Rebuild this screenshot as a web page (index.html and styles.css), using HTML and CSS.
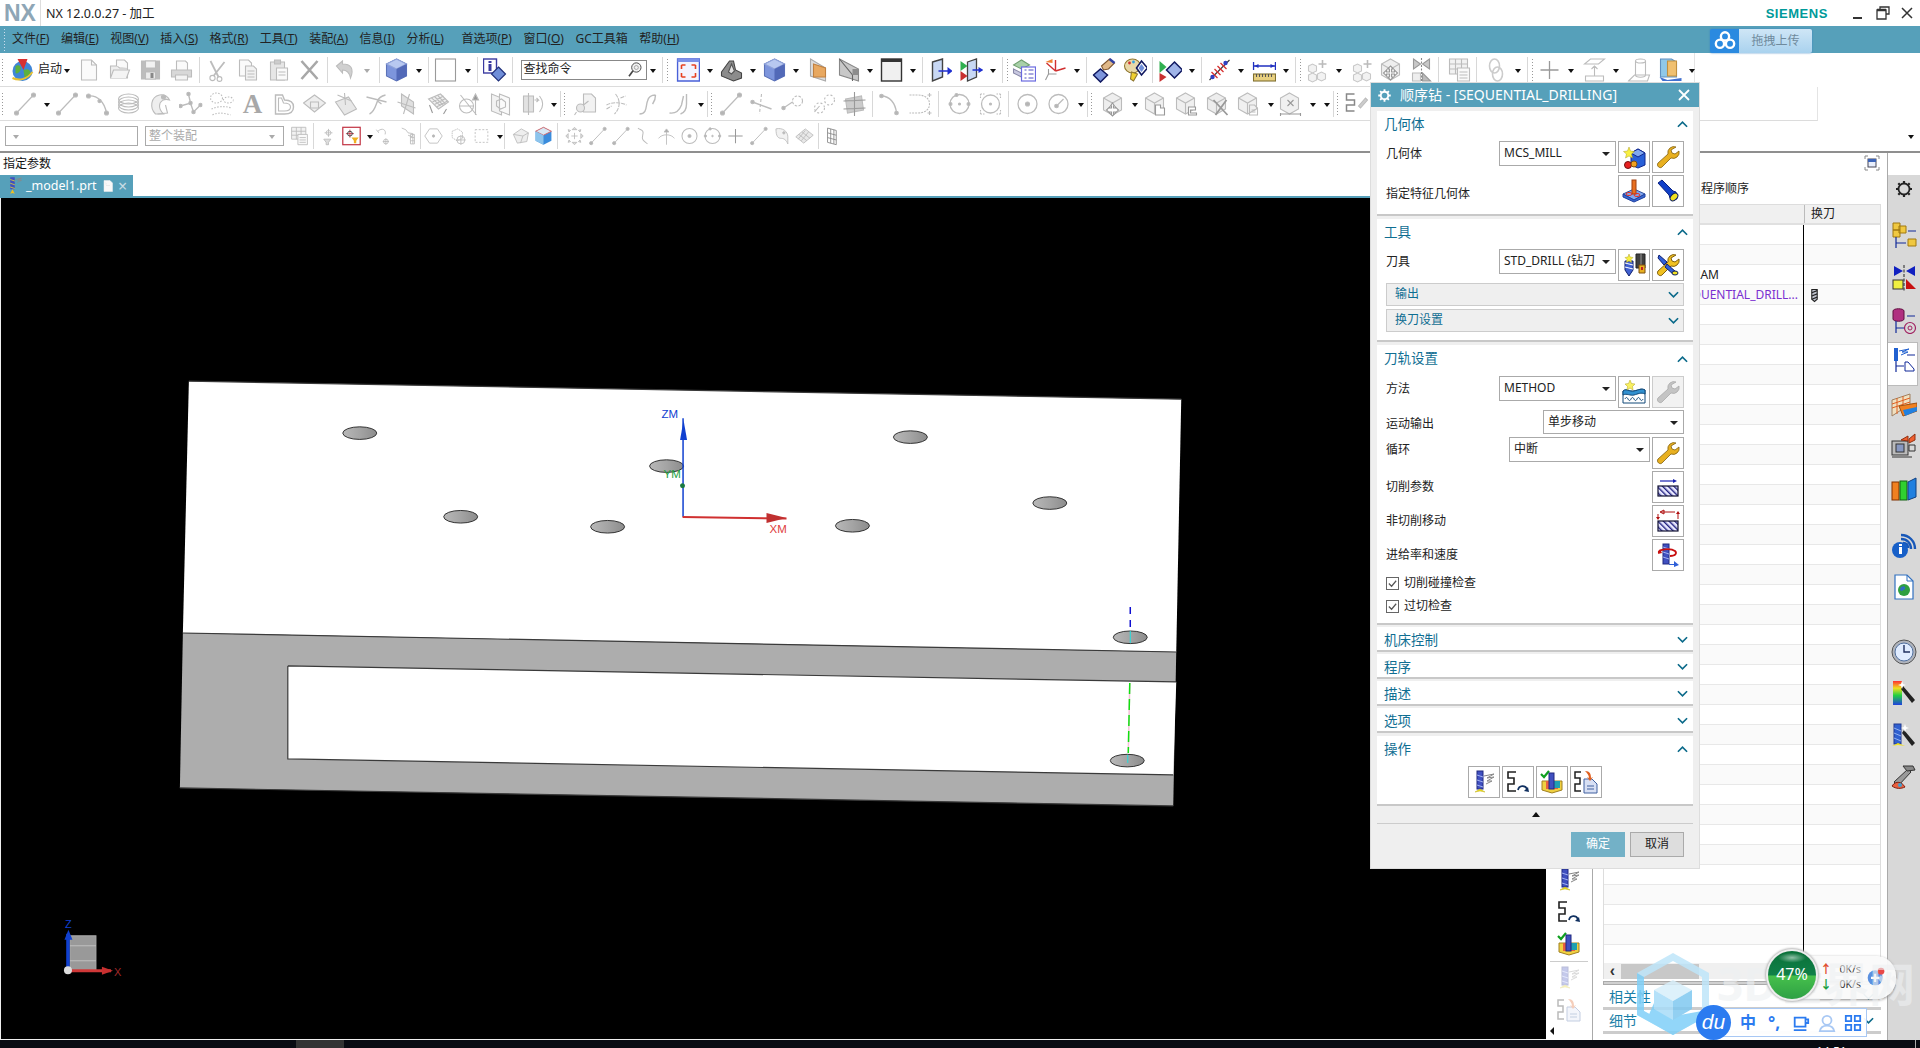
FILE: index.html
```html
<!DOCTYPE html>
<html lang="zh-CN">
<head>
<meta charset="utf-8">
<title>NX 12.0.0.27 - 加工</title>
<link rel="stylesheet" href="styles.css">
</head>
<body>
<svg class="defs" aria-hidden="true">
<defs>
<pattern id="hatch" width="4" height="4" patternUnits="userSpaceOnUse" patternTransform="rotate(-45)"><rect width="4" height="4" fill="#e8e8ff"/><rect width="1.4" height="4" fill="#202080"/></pattern>
<linearGradient id="rainbow" x1="0" y1="0" x2="0" y2="1"><stop offset="0" stop-color="#ff3030"/><stop offset=".3" stop-color="#f0e020"/><stop offset=".6" stop-color="#20d040"/><stop offset="1" stop-color="#2040e0"/></linearGradient>
<linearGradient id="holeg" x1="0" y1="0" x2="1" y2="0"><stop offset="0" stop-color="#b8b8b8"/><stop offset=".5" stop-color="#a4a4a4"/><stop offset="1" stop-color="#8c8c8c"/></linearGradient>
<symbol id="globe" viewBox="0 0 24 24"><circle cx="12" cy="13" r="10" fill="#3f86d8" stroke="none"/><path d="M5 8c4-2 6 1 5 4s-4 4-5 3zM13 12c4-2 7 0 7 3s-4 6-6 4z" fill="#5cb040" stroke="none"/><path d="M7 1l10 0-4 11z" fill="#d83030" stroke="none"/><path d="M2 20c6 3 14 2 20-6" stroke="#e8c030" stroke-width="2"/></symbol>
<symbol id="doc" viewBox="0 0 24 24"><path d="M5 2h10l5 5v15H5z" fill="#fafafa"/><path d="M15 2v5h5"/></symbol>
<symbol id="open" viewBox="0 0 24 24"><path d="M3 8h7l2 2h8v10H3z" fill="#eee"/><path d="M9 8V2h8l3 3v5" fill="#fafafa"/><path d="M3 20l3-8h16l-3 8" fill="#f4f4f4"/></symbol>
<symbol id="save" viewBox="0 0 24 24"><path d="M3 3h18v18H3z" fill="#bdbdbd"/><path d="M7 3h10v7H7z" fill="#f2f2f2"/><path d="M7 14h10v7H7z" fill="#ececec"/><path d="M12 15h3v5h-3z" fill="#888" stroke="none"/></symbol>
<symbol id="print" viewBox="0 0 24 24"><path d="M7 12V3h9l2 2v7" fill="#fafafa"/><path d="M2 12h20v7H2z" fill="#d8d8d8"/><path d="M6 17h12v5H6z" fill="#f4f4f4"/></symbol>
<symbol id="cut" viewBox="0 0 24 24"><circle cx="8" cy="20" r="2.6"/><circle cx="15" cy="21" r="2.4"/><path d="M9 18L20 4M14 19L6 3" stroke-width="1.8"/></symbol>
<symbol id="copy" viewBox="0 0 24 24"><path d="M4 2h9l3 3v13H4z" fill="#fafafa"/><path d="M10 8h8l3 3v11H10z" fill="#f2f2f2"/><path d="M12 13h7M12 16h7M12 19h7"/></symbol>
<symbol id="paste" viewBox="0 0 24 24"><path d="M4 4h14v18H4z" fill="#e6e6e6"/><path d="M8 2h6v4H8z" fill="#ccc"/><path d="M10 10h11v12H10z" fill="#fafafa"/><path d="M12 14h7M12 17h7"/></symbol>
<symbol id="del" viewBox="0 0 24 24"><path d="M4 3l16 18M20 3L4 21" stroke="#a8a8a8" stroke-width="2.6"/></symbol>
<symbol id="undo" viewBox="0 0 24 24"><path d="M4 8l6-5v3c8 0 12 4 8 14-1-5-3-8-8-8v3z" fill="#d0d0d0"/></symbol>
<symbol id="cube" viewBox="0 0 24 24"><path d="M12 1l10 5v12l-10 5-10-5V6z" fill="#7d95dc" stroke="#5c73b8"/><path d="M2 6l10 5 10-5-10-5z" fill="#b8c8f0" stroke="#8fa2d8"/><path d="M12 11v12l10-5V6z" fill="#5269b8" stroke="none"/></symbol>
<symbol id="frame" viewBox="0 0 24 24"><rect x="2" y="1" width="20" height="22" fill="#fff" stroke="#9a9a9a"/></symbol>
<symbol id="info" viewBox="0 0 24 24"><rect x="1" y="1" width="13" height="14" fill="#fff" stroke="#3a3aa0" stroke-width="1.4"/><path d="M6 3h3v2H6zM6 6h3v7H6z" fill="#3a3aa0" stroke="none"/><path d="M16 9l7 7-7 7-7-7z" fill="#6f8ed8" stroke="#20307a" stroke-width="1.2"/></symbol>
<symbol id="fit" viewBox="0 0 24 24"><rect x="1" y="1" width="22" height="22" fill="#f4f4ff" stroke="#4860d8" stroke-width="1.5"/><path d="M1 1h22v3H1z" fill="#7c90e8" stroke="none"/><path d="M5 7h4M5 7v4M19 7h-4M19 7v4M5 19h4M5 19v-4M19 19h-4M19 19v-4" stroke="#e84020" stroke-width="1.6"/></symbol>
<symbol id="shade" viewBox="0 0 24 24"><path d="M2 14l8-11h4l2 9 6 3v5l-8 3-12-5z" fill="#8c8c8c" stroke="#444"/><path d="M9 14l3-8 3 7-3 3z" fill="#e0e0e0" stroke="#555"/></symbol>
<symbol id="vorange" viewBox="0 0 24 24"><path d="M5 1l15 9v13L5 18z" fill="#ddd" stroke="#aaa"/><path d="M8 6l12 4v9H8z" fill="#e8a860" stroke="#c08040"/></symbol>
<symbol id="vgray" viewBox="0 0 24 24"><path d="M3 1l19 10v12L3 17z" fill="#c8c8c8" stroke="#888"/><path d="M3 1l13 16v6" stroke="#666"/><path d="M16 11h6v6h-6z" fill="#8c8c8c" stroke="none"/></symbol>
<symbol id="win" viewBox="0 0 24 24"><rect x="2" y="1" width="20" height="22" fill="#f0f0f0" stroke="#333" stroke-width="1.4"/><rect x="2" y="1" width="20" height="3" fill="#333" stroke="none"/></symbol>
<symbol id="vblue" viewBox="0 0 24 24"><path d="M4 4l10-3v18L4 23z" fill="#c8d8f4" stroke="#444" stroke-width="1.4"/><path d="M10 13h11" stroke="#2030d0" stroke-width="1.6"/><path d="M19 9l5 4-5 4z" fill="#2030d0" stroke="none"/></symbol>
<symbol id="vplay" viewBox="0 0 24 24"><path d="M8 4l9-3v18l-9 4z" fill="#c8d8f4" stroke="#444" stroke-width="1.3"/><path d="M1 3l7 5-7 5z" fill="#30b050" stroke="none"/><path d="M1 13l7 5-7 5z" fill="#c83030" stroke="none"/><path d="M13 12h7" stroke="#2030d0" stroke-width="1.6"/><path d="M19 9l5 3-5 3z" fill="#2030d0" stroke="none"/></symbol>
<symbol id="lst" viewBox="0 0 24 24"><path d="M1 7l8-5 8 5-8 4z" fill="#a8d0a8" stroke="#70a070"/><path d="M1 11l8 4v4l-8-4zM1 15l8 4" fill="#c8c8e0" stroke="#8888a8"/><rect x="9" y="9" width="14" height="14" fill="#fff" stroke="#6a6ae0" stroke-width="1.2"/><path d="M12 12h2M16 12h5M12 16h2M16 16h5M12 20h2M16 20h5" stroke="#5050c0"/></symbol>
<symbol id="axes" viewBox="0 0 24 24"><path d="M12 13V2M12 13l10-3M12 13L3 5" stroke="#d03030" stroke-width="1.4"/><path d="M2 4l7-3v4z" fill="#f08030" stroke="none"/><path d="M5 16l-3 6M5 16h8M5 16v-5" stroke="#999"/></symbol>
<symbol id="hand" viewBox="0 0 24 24"><path d="M9 8l8-7 5 4-6 6-5 1z" fill="#e0b888" stroke="#805830"/><path d="M17 1l5 4" stroke="#3040a0" stroke-width="2.5"/><path d="M8 11l7 6-7 7-7-7z" fill="#7d95dc" stroke="#101860" stroke-width="1.5"/></symbol>
<symbol id="palette" viewBox="0 0 24 24"><ellipse cx="9" cy="8" rx="8" ry="7" fill="#e8d8a8" stroke="#907830"/><circle cx="6" cy="5" r="1.4" fill="#d03030" stroke="none"/><circle cx="10" cy="4" r="1.4" fill="#30a0e0" stroke="none"/><path d="M8 14l6 2-4 7-3-2z" fill="#f0d030" stroke="#907830"/><path d="M18 3l6 7-6 7-5-7z" fill="#fff" stroke="#101860" stroke-width="1.6"/><path d="M18 6l3 4-3 4-3-4z" fill="#6f8ed8" stroke="none"/></symbol>
<symbol id="pdia" viewBox="0 0 24 24"><path d="M1 3l7 6-7 6z" fill="#30b050" stroke="none"/><path d="M1 15l7 4-7 5z" fill="#c83030" stroke="none"/><path d="M16 4l8 8-8 8-8-8z" fill="#a0b4e8" stroke="#101860" stroke-width="1.5"/></symbol>
<symbol id="ant" viewBox="0 0 24 24"><path d="M2 22L22 2" stroke="#333"/><path d="M4 14l6 6M7 11l6 6M10 8l6 6M13 5l6 6" stroke="#d83030" stroke-width="1.3"/><circle cx="5" cy="19" r="2.2" fill="#3040c0" stroke="none"/><circle cx="18" cy="5" r="2.2" fill="#3040c0" stroke="none"/></symbol>
<symbol id="dim" viewBox="0 0 24 24"><path d="M1 4v8M23 4v8M1 8h22" stroke="#2030c0" stroke-width="1.4"/><path d="M2 8l4-2v4zM22 8l-4-2v4z" fill="#2030c0" stroke="none"/><rect x="1" y="16" width="22" height="7" fill="#e8d080" stroke="#807030"/><path d="M4 16v3M7 16v3M10 16v3M13 16v3M16 16v3M19 16v3" stroke="#555"/></symbol>
<symbol id="cplus" viewBox="0 0 24 24"><path d="M3 8l4-2 4 2v5l-4 2-4-2zM3 17l4-2 4 2v5l-4 2-4-2zM12 16l4-2 4 2v5l-4 2-4-2z" fill="#f2f2f2" stroke="#c8c8c8"/><path d="M17 2v8M13 6h8" stroke="#bbb" stroke-width="1.6"/></symbol>
<symbol id="cmove" viewBox="0 0 24 24"><path d="M12 1l9 5v11l-9 5-9-5V6z" fill="#eee" stroke="#bbb"/><path d="M12 11v11M3 6l9 5 9-5"/><path d="M12 8l3 3h-2v3h3v-2l3 3-3 3v-2h-3v3h2l-3 3-3-3h2v-3H8v2l-3-3 3-3v2h3v-3H9z" fill="#fff" stroke="#999"/></symbol>
<symbol id="mirror" viewBox="0 0 24 24"><path d="M12 0v24" stroke="#888" stroke-dasharray="2 1.5"/><path d="M4 1l7 5-7 5zM20 1l-7 5 7 5z" fill="#c8c8c8" stroke="#999"/><path d="M3 15h8v8H3z" fill="#eee"/><path d="M13 15l8 8h-8z" fill="#bbb" stroke="#999"/></symbol>
<symbol id="gridd" viewBox="0 0 24 24"><path d="M2 1h18v15H2z" fill="#f2f2f2"/><path d="M2 6h18M2 11h18M8 1v15M14 1v15"/><path d="M10 10h12v13H10z" fill="#fafafa"/><path d="M12 14h8M12 17h8M12 20h8"/></symbol>
<symbol id="link" viewBox="0 0 24 24"><ellipse cx="10" cy="8" rx="5" ry="7" fill="none" stroke-width="1.6" stroke="#ccc"/><ellipse cx="13" cy="16" rx="5" ry="7" stroke-width="1.6" stroke="#ccc"/></symbol>
<symbol id="plus" viewBox="0 0 24 24"><path d="M12 3v18M3 12h18" stroke="#999" stroke-width="1.3"/></symbol>
<symbol id="plusk" viewBox="0 0 24 24"><path d="M12 3v18M3 12h18" stroke="#222" stroke-width="1.3"/></symbol>
<symbol id="extr" viewBox="0 0 24 24"><path d="M8 1h14l-6 5H2zM3 18h18v5H3zM12 18V8M9 11l3-3 3 3"/></symbol>
<symbol id="cyl" viewBox="0 0 24 24"><ellipse cx="13" cy="3" rx="5" ry="2"/><path d="M8 3v14M18 3v14M8 17c0 3 10 3 10 0M1 23l6-6h15l-2 6z"/></symbol>
<symbol id="ccol" viewBox="0 0 24 24"><path d="M2 1h11l5 3v15H2z" fill="#90c8e8" stroke="#6090c0"/><path d="M9 3h9v15H9z" fill="#f0c070" stroke="#c09040"/><path d="M1 19l8 3 14-2 0 3H4z" fill="#4070d0" stroke="none"/></symbol>
<symbol id="ln" viewBox="0 0 24 24"><path d="M4 21L21 3" stroke-width="1.2"/><circle cx="4" cy="21" r="2" fill="#b5b5b5"/><circle cx="21" cy="3" r="2" fill="#b5b5b5"/></symbol>
<symbol id="arc" viewBox="0 0 24 24"><path d="M3 4c9-1 16 6 18 17" stroke-width="1.4"/><circle cx="3" cy="4" r="2" fill="#b5b5b5"/><circle cx="21" cy="21" r="2" fill="#b5b5b5"/><circle cx="14" cy="9" r="1.6" fill="#b5b5b5"/></symbol>
<symbol id="spir" viewBox="0 0 24 24"><ellipse cx="12" cy="7" rx="10" ry="5"/><ellipse cx="12" cy="10" rx="10" ry="5"/><ellipse cx="12" cy="13" rx="10" ry="5"/><ellipse cx="12" cy="16" rx="10" ry="5"/></symbol>
<symbol id="fan" viewBox="0 0 24 24"><path d="M8 22C2 16 3 5 12 3c5-1 9 2 10 5-5-2-10 1-10 6 0 4 2 6 4 8z" fill="#eee"/><path d="M10 22l10-1-2-8" /><circle cx="16" cy="5" r="2" fill="#bbb"/></symbol>
<symbol id="star" viewBox="0 0 24 24"><path d="M2 14l10-3 3 9 7-7M12 11l-2-9" stroke-width="1.4"/><circle cx="2" cy="14" r="1.7" fill="#b5b5b5"/><circle cx="12" cy="11" r="1.7" fill="#b5b5b5"/><circle cx="15" cy="20" r="1.7" fill="#b5b5b5"/><circle cx="22" cy="13" r="1.7" fill="#b5b5b5"/><circle cx="10" cy="2" r="1.7" fill="#b5b5b5"/></symbol>
<symbol id="dots" viewBox="0 0 24 24"><g stroke-dasharray="1.5 1.5"><ellipse cx="7" cy="6" rx="6" ry="5"/><ellipse cx="19" cy="8" rx="5" ry="3"/><path d="M2 17c6-3 14-3 20-1M3 23c5-3 12-2 18 0"/></g></symbol>
<symbol id="face" viewBox="0 0 24 24"><path d="M4 3h7l2 5c7 0 9 3 9 7s-3 7-9 7H4z" stroke-width="1.4"/><path d="M7 6h3l2 5c6 0 7 2 7 4s-2 4-6 4H7z"/></symbol>
<symbol id="tilt" viewBox="0 0 24 24"><path d="M1 11l11-8 11 8-11 9z" fill="#eee"/><path d="M8 10h8v6H8z"/></symbol>
<symbol id="tilt2" viewBox="0 0 24 24"><path d="M2 10l13-5 8 12-12 6z" fill="#e8e8e8"/><path d="M11 1l1 12M4 3l14 6"/></symbol>
<symbol id="cross" viewBox="0 0 24 24"><path d="M5 22c5-2 6-8 8-13 1-3 4-5 8-6M2 5l20 5M13 9l4 3" stroke-width="1.4"/></symbol>
<symbol id="plane" viewBox="0 0 24 24"><path d="M6 2l12 8v12L6 14z" fill="#e0e0e0"/><path d="M2 10l18 6M14 2L8 22"/></symbol>
<symbol id="mesh" viewBox="0 0 24 24"><path d="M2 7l12-5 8 8-10 7z" fill="#f0f0f0"/><path d="M5 5.800l9 8M8 4.500l9 9M11 3.200l8 9M6 10l11-6M8 12.500l11-6M10 15l11-6"/><path d="M3 13l3 8M20 17l-3 5" stroke="#999"/></symbol>
<symbol id="sect" viewBox="0 0 24 24"><ellipse cx="9" cy="14" rx="7" ry="7"/><path d="M2 14h14M3 3l16 20M18 3v20"/><path d="M18 2l3 6h-6z" fill="#999"/></symbol>
<symbol id="box2" viewBox="0 0 24 24"><path d="M3 2l10 4v17L3 19z" fill="#f2f2f2"/><path d="M11 2l10 4v17l-10-4z" fill="#fafafa"/><path d="M8 9l5-2 4 3v5l-5 2-4-3z"/></symbol>
<symbol id="cyl2" viewBox="0 0 24 24"><path d="M4 4h10v16H4z" fill="#e2e2e2"/><path d="M9 1v22"/><path d="M15 8h4l-2-2M19 8l-2 2M20 4c4 5 4 11 0 16"/></symbol>
<symbol id="key" viewBox="0 0 24 24"><path d="M10 2h8l4 4v14H10z" fill="#f2f2f2"/><circle cx="7" cy="16" r="4" fill="#e8e8e8"/><path d="M3 20l-2 3M10 13l5-4"/></symbol>
<symbol id="sw" viewBox="0 0 24 24"><path d="M2 13c6-3 14-3 20 0M11 2c5 6 5 14-1 20M2 17l5-3M16 6l5-2" stroke-dasharray="4 1"/></symbol>
<symbol id="scurve" viewBox="0 0 24 24"><path d="M4 22c8 0 6-8 8-13 1-4 4-6 8-6M17 12c2-3 3-4 3-9" stroke-width="1.4"/></symbol>
<symbol id="ucurve" viewBox="0 0 24 24"><path d="M3 21c7 1 10-3 12-8l2-9M20 2v10c0 6-3 9-6 10" stroke-width="1.4"/></symbol>
<symbol id="cross2" viewBox="0 0 24 24"><path d="M12 2L10 22" stroke-dasharray="3 2"/><path d="M3 10l19 7" stroke-width="1.4"/><circle cx="3" cy="10" r="1.7" fill="#b5b5b5"/></symbol>
<symbol id="arcd" viewBox="0 0 24 24"><path d="M3 16l9-6"/><circle cx="3" cy="16" r="1.7" fill="#b5b5b5"/><circle cx="17" cy="9" r="5" stroke-dasharray="2.500 1.500"/></symbol>
<symbol id="arcd2" viewBox="0 0 24 24"><path d="M3 20L8 14" /><circle cx="8" cy="16" r="5" stroke-dasharray="2 2"/><circle cx="18" cy="8" r="5" stroke-dasharray="2 2"/></symbol>
<symbol id="pad" viewBox="0 0 24 24"><path d="M3 7l16-3 2 14-16 3z" fill="#ccc"/><path d="M1 9l22-1M1 17l22-1M12 0v24" stroke="#999"/></symbol>
<symbol id="arc2" viewBox="0 0 24 24"><path d="M4 4c8 0 14 7 15 17" stroke-width="1.4"/><circle cx="4" cy="4" r="1.8" fill="#b5b5b5"/><circle cx="19" cy="21" r="1.8" fill="#b5b5b5"/></symbol>
<symbol id="cap" viewBox="0 0 24 24"><path d="M1 3h8c7 0 12 3 12 9s-5 9-12 9H1" stroke-dasharray="2 1"/><path d="M21 1v4M19 3h4M21 19v4M19 21h4"/></symbol>
<symbol id="circ" viewBox="0 0 24 24"><circle cx="12" cy="12" r="9.500" stroke-width="1.3"/><circle cx="12" cy="12" r="1" fill="#b5b5b5"/><circle cx="21" cy="12" r="1.500" fill="#b5b5b5"/><circle cx="9" cy="3" r="1.500" fill="#b5b5b5"/><circle cx="3" cy="12" r="1.500" fill="#b5b5b5"/></symbol>
<symbol id="circb" viewBox="0 0 24 24"><circle cx="12" cy="12" r="9" stroke-width="1.3"/><circle cx="12" cy="12" r="1" fill="#b5b5b5"/><path d="M2 2h4M2 2v4M22 2h-4M22 2v4M2 22h4M2 22v-4M22 22h-4M22 22v-4" stroke-dasharray="1.500 1"/></symbol>
<symbol id="circc" viewBox="0 0 24 24"><circle cx="12" cy="12" r="9.500" stroke-width="1.3"/><circle cx="12" cy="12" r="2" fill="#b5b5b5"/></symbol>
<symbol id="circd" viewBox="0 0 24 24"><circle cx="12" cy="12" r="9.500" stroke-width="1.3"/><path d="M10 14l7-7" stroke-width="1.3"/><circle cx="10" cy="14" r="1.800" fill="#b5b5b5"/></symbol>
<symbol id="b1" viewBox="0 0 24 24"><path d="M12 1l9 5v12l-9 5-9-5V6z" fill="#eee" stroke="#bbb"/><path d="M12 11v12M3 6l9 5 9-5"/><path d="M12 11l2 3h-1v2h2v-1l3 3-3 3v-1h-2v2h1l-2 2-2-2h1v-2H9v1l-3-3 3-3v1h2v-2h-1z" fill="#fff" stroke="#999"/></symbol>
<symbol id="b2" viewBox="0 0 24 24"><path d="M11 1l9 5v11l-9 5-9-5V6z" fill="#f0f0f0"/><path d="M11 11v11M2 6l9 5 9-5"/><path d="M12 13h5v3h4v7h-9z" fill="#fff" stroke="#999"/></symbol>
<symbol id="b3" viewBox="0 0 24 24"><path d="M11 1l9 5v11l-9 5-9-5V6z" fill="#f0f0f0"/><path d="M11 11v11M2 6l9 5 9-5"/><path d="M14 15h7v3h-5v3h6v2h-8z" fill="#fff" stroke="#999"/></symbol>
<symbol id="b4" viewBox="0 0 24 24"><path d="M11 1l9 5v11l-9 5-9-5V6z" fill="#ededed"/><path d="M11 11v11M2 6l9 5 9-5"/><path d="M8 8l14 15M21 8L10 23" stroke="#999" stroke-width="1.8"/></symbol>
<symbol id="b5" viewBox="0 0 24 24"><path d="M11 1l9 5v11l-9 5-9-5V6z" fill="#f0f0f0"/><path d="M11 11v11M2 6l9 5 9-5"/><path d="M13 13h5l3 3v7h-8zM15 18h4M15 20h4"/></symbol>
<symbol id="b6" viewBox="0 0 24 24"><path d="M11 1l9 5v11l-9 5-9-5V6z" fill="#f0f0f0"/><path d="M2 21v3M22 21v3M2 22h20M9 8l6 6M15 8l-6 6" stroke="#999"/></symbol>
<symbol id="sb" viewBox="0 0 24 24"><path d="M10 2H2v6h8v5H2v6h8" stroke="#888" stroke-width="1.5"/><path d="M14 14l7-8 2 2-7 8z" fill="#ccc"/></symbol>
<symbol id="drillk" viewBox="0 0 24 24"><path d="M4 1h16l-2 4H6z" fill="#444" stroke="#222"/><path d="M5 5h14v18H5z" fill="#666" stroke="#333"/><path d="M13 13h5v8h-5z" fill="#ddd" stroke="none"/><path d="M7 16h4v6H7z" fill="#aaa" stroke="none"/></symbol>
<symbol id="redar" viewBox="0 0 24 24"><path d="M3 22l16-17" stroke="#c83030" stroke-width="1.4"/><path d="M22 2l-7 2 4 4z" fill="#c83030" stroke="none"/><circle cx="3" cy="21" r="2" fill="#c83030" stroke="none"/></symbol>
<symbol id="gridv" viewBox="0 0 24 24"><path d="M7 2l11 3v18L7 20zM7 8l11 3M7 14l11 3M11 3v18M15 4v18" stroke="#888"/></symbol>
<symbol id="hexa" viewBox="0 0 24 24"><path d="M7 3h10l6 9-6 9H7L1 12z"/><circle cx="12" cy="12" r="1.500" fill="#b5b5b5"/></symbol>
<symbol id="hexb" viewBox="0 0 24 24"><path d="M4 6l7-3 6 4v8l-7 3-6-4z" stroke-dasharray="2 1"/><circle cx="15" cy="17" r="5"/><path d="M15 11v12M9 17h12"/></symbol>
<symbol id="sq" viewBox="0 0 24 24"><rect x="4" y="4" width="16" height="16" stroke-dasharray="2.500 2"/></symbol>
<symbol id="cgray" viewBox="0 0 24 24"><path d="M3 10l10-7 9 5-2 11-12 2z" fill="#eee"/><path d="M3 10l12 2 7-4M15 12l-3 9"/></symbol>
<symbol id="cblue" viewBox="0 0 24 24"><path d="M12 1l10 5v12l-10 5-10-5V6z" fill="#3a8cdc" stroke="none"/><path d="M2 6l10 5 10-5-10-5z" fill="#d8e8f4" stroke="#d86060"/><path d="M2 6v12l10 5V11z" fill="#8cc4ec" stroke="none"/></symbol>
<symbol id="wh" viewBox="0 0 24 24"><path d="M12 8v8M8 12h8"/><path d="M12 1l3 3h-6zM12 23l3-3H9zM1 12l3-3v6zM23 12l-3-3v6z" fill="#ddd"/><path d="M4 4l3 1-2 2zM20 4l-3 1 2 2zM4 20l3-1-2-2zM20 20l-3-1 2-2z" fill="#ddd"/></symbol>
<symbol id="tee" viewBox="0 0 24 24"><path d="M2 15c4-6 16-6 20 0M12 5v18"/><path d="M12 3l3 4H9z" fill="#aaa"/></symbol>
<symbol id="ss" viewBox="0 0 24 24"><path d="M5 2c4 3 8 2 6 9s3 8 6 11" stroke-width="1.3"/></symbol>
<symbol id="lens" viewBox="0 0 24 24"><circle cx="14" cy="9" r="7" fill="#f0f0f0" stroke="#444" stroke-width="1.4"/><circle cx="14" cy="9" r="3" stroke="#888"/><path d="M9 14l-6 8" stroke="#444" stroke-width="2.5"/></symbol>
<symbol id="ptfilter" viewBox="0 0 24 24"><path d="M12 3v10M7 8h10"/><circle cx="12" cy="8" r="3"/><path d="M6 16h9l-3 4v3h-3v-3z" fill="#ddd"/></symbol>
<symbol id="ptred" viewBox="0 0 24 24"><rect x="1" y="1" width="22" height="22" fill="#fff" stroke="#c03040" stroke-width="1.5"/><path d="M10 4v10M5 9h10" stroke="#c03040"/><circle cx="10" cy="9" r="3" stroke="#333"/><path d="M12 14h9l-3 4v3h-3v-3z" fill="#f0b020" stroke="none"/></symbol>
<symbol id="rot" viewBox="0 0 24 24"><path d="M5 6c5-5 11-2 9 4M3 4l3 4M15 15v8M11 19h8"/><circle cx="15" cy="19" r="3"/></symbol>
<symbol id="pl" viewBox="0 0 24 24"><path d="M6 2l5 2 3 4 6 1-1 4-5-2M17 10h5v12h-5zM17 14h5M17 18h5M20 10v12"/></symbol>
<symbol id="sphere" viewBox="0 0 24 24"><path d="M5 3c8-2 15 3 15 10v9c-2-5-5-7-8-7-4 0-7-2-7-12z" fill="#f2f2f2"/><circle cx="15" cy="8" r="1.500" fill="#bbb"/></symbol>
<symbol id="mesh2" viewBox="0 0 24 24"><path d="M1 13L13 3l10 8-12 10z" fill="#e8e8e8"/><path d="M5 10l10 8M9 7l10 8M13 5l-9 11M17 7l-9 11"/></symbol>

<symbol id="wrench" viewBox="0 0 24 24"><path d="M20 2a6 6 0 0 0-8 7L2 18c-2 3 2 6 4 4l9-9a6 6 0 0 0 8-7l-4 3-3-1-1-3z" fill="currentColor"/></symbol>
<symbol id="geonew" viewBox="0 0 24 24"><path d="M9 8l7-4 7 4v12l-7 3-7-3z" fill="#2860d8" stroke="#102890"/><path d="M9 8l7 4 7-4-7-4z" fill="#80a8f0" stroke="#102890"/><circle cx="6" cy="20" r="3.500" fill="#e82020" stroke="#701010"/><circle cx="12" cy="19" r="3" fill="#f0a020" stroke="#805010"/><path d="M7 2l1.500 4 4 .5-3 2.500 1 4-3.500-2-3.500 2 1-4-3-2.500 4-.5z" fill="#f8f040" stroke="#b0a020" stroke-width=".5"/></symbol>
<symbol id="feat" viewBox="0 0 24 24"><path d="M1 15l11-5 11 5-11 6z" fill="#80a8f0" stroke="#3050a0"/><path d="M1 15v3l11 5 11-5v-3l-11 6z" fill="#3868d0" stroke="#2040a0"/><rect x="10" y="1" width="4" height="14" fill="#e87020" stroke="#a04010"/><ellipse cx="7" cy="15" rx="3" ry="1.500" stroke="#e83020"/><ellipse cx="15" cy="16" rx="3" ry="1.500" stroke="#e83020"/></symbol>
<symbol id="flash" viewBox="0 0 24 24"><path d="M2 4l4-3 11 11 3 1 1 7-7-1-1-3z" fill="#1040c8" stroke="#082080"/><ellipse cx="18" cy="18" rx="4.500" ry="3" transform="rotate(-45 18 18)" fill="#f0e020" stroke="#102060"/></symbol>
<symbol id="toolnew" viewBox="0 0 24 24"><path d="M14 1h9v14h-9z" fill="#404040" stroke="#222"/><path d="M19 1v14" stroke="#999"/><path d="M17 12h6v8h-6z" fill="#e8b020" stroke="#805010"/><rect x="19" y="14" width="2" height="3" fill="#c02020" stroke="none"/><path d="M3 8h8v9l-4 6-4-6z" fill="#4060d0" stroke="#102070"/><path d="M3 10l8 2M3 14l8 2" stroke="#fff"/><path d="M7 1l1 3 3 .5-2 2 .5 3L7 8 4.500 9.500 5 6.500l-2-2L6 4z" fill="#f8f040" stroke="#b0a020" stroke-width=".5"/></symbol>
<symbol id="wrench2" viewBox="0 0 24 24"><path d="M20 2a6 6 0 0 0-8 7L2 18c-2 3 2 6 4 4l9-9a6 6 0 0 0 8-7l-4 3-3-1-1-3z" fill="#f0c020" stroke="#806010"/><path d="M3 2l8 7-3 3-6-7zM11 11l9 8-2 3-9-8z" fill="#3060d8" stroke="#102070"/><ellipse cx="19" cy="20" rx="3" ry="2" fill="#f0e020" stroke="#102060"/></symbol>
<symbol id="method" viewBox="0 0 24 24"><path d="M1 11c4-3 6 1 11 0s7-3 11-1v13H1z" fill="#fff" stroke="#104878"/><path d="M1 11c4-3 6 1 11 0s7-3 11-1v4c-4-2-7 0-11 1S5 13 1 15z" fill="#3090d0" stroke="#104878"/><path d="M3 19c1-2 2-2 3 0s2 2 3 0 2-2 3 0 2 2 3 0 2-2 3 0 2 2 3 0" stroke="#104878"/><path d="M8 0l1.500 3.500 3.500.500-2.500 2.500.500 3.500-3-2-3 2 .500-3.500L3 4l3.500-.5z" fill="#f8f060" stroke="#b0a020" stroke-width=".5"/></symbol>
<symbol id="cutp" viewBox="0 0 24 24"><path d="M4 6h15" stroke="#1820b0" stroke-width="1.200"/><path d="M21 6l-4-2v4z" fill="#1820b0" stroke="none"/><rect x="2" y="11" width="20" height="10" fill="url(#hatch)" stroke="#101030" stroke-width="1.200"/></symbol>
<symbol id="ncut" viewBox="0 0 24 24"><path d="M5 3h14" stroke="#b01010"/><path d="M4 3l4-2v4zM2 5v5M22 5v5" stroke="#b01010"/><path d="M0 8h4l-2 3zM20 5h4l-2-3z" fill="#b01010" stroke="none"/><rect x="2" y="12" width="20" height="10" fill="url(#hatch)" stroke="#101030" stroke-width="1.200"/></symbol>
<symbol id="feed" viewBox="0 0 24 24"><rect x="7" y="1" width="6" height="20" fill="#4050c0" stroke="#202880"/><path d="M7 4l6 2M7 9l6 2M7 14l6 2" stroke="#a0b0f0"/><path d="M3 10c-2-4 12-5 16-2 2 2 1 5-5 5" stroke="#c81010" stroke-width="1.800"/><path d="M4 6l2 4-4 1z" fill="#c81010" stroke="none"/><path d="M13 21h5v-3l5 4-5 2v-2h-5z" fill="#3060d8" stroke="none"/></symbol>
<symbol id="opgen" viewBox="0 0 24 24"><rect x="5" y="1" width="6" height="18" fill="#4050c0" stroke="#202880"/><path d="M5 5l6 2M5 10l6 2M5 15l6 2" stroke="#a0b0f0"/><path d="M12 6l10-2-7 4 7-1-7 4 5 0-6 3" stroke="#888"/><path d="M3 22l5-3 5 3-5-1z" fill="#f0e020" stroke="#c0b010" stroke-width=".5"/></symbol>
<symbol id="opss" viewBox="0 0 24 24"><path d="M10 2H2v6h6v6H2v7h8" stroke="#202020" stroke-width="1.600"/><path d="M12 20c1-5 7-5 9-1" stroke="#103060" stroke-width="1.800"/><path d="M23 22l-5-1 4-4z" fill="#103060" stroke="none"/></symbol>
<symbol id="opver" viewBox="0 0 24 24"><path d="M1 4l3 3 5-6" stroke="#10a020" stroke-width="2.200"/><path d="M2 11h20v9l-10 3-10-3z" fill="#f0d040" stroke="#a08020"/><path d="M6 11h12v8H6z" fill="#e86040" stroke="none"/><path d="M14 11h6v7h-6z" fill="#20a0b0" stroke="none"/><rect x="9" y="3" width="5" height="16" fill="#4050c0" stroke="#202880"/></symbol>
<symbol id="opdoc" viewBox="0 0 24 24"><path d="M7 2H1v6h5v6H1v7h6" stroke="#202020" stroke-width="1.500"/><path d="M10 9h8l5 5v9H10z" fill="#d8e0f4" stroke="#4060a0"/><path d="M13 16h7M13 19h7" stroke="#4060a0"/><path d="M11 1c5 0 6 3 6 7l2-1-3 4-3-4 2 1c0-3-2-5-4-7z" fill="#e06020" stroke="none"/></symbol>
<symbol id="tgear" viewBox="0 0 24 24"><path d="M12 4v2M12 18v2M4 12h2M18 12h2M6.300 6.300l1.500 1.500M16.200 16.200l1.500 1.500M17.700 6.300l-1.500 1.500M7.800 16.200l-1.500 1.500" stroke="#222" stroke-width="2.200"/><circle cx="12" cy="12" r="5.500" fill="none" stroke="#222" stroke-width="1.800"/></symbol>
<symbol id="s1" viewBox="0 0 26 26"><path d="M2 1h7v7H2zM8 4h7v7H8zM2 8h7v7H2z" fill="#f0c840" stroke="#a07810"/><path d="M17 17h8v7h-8z" fill="#f0c840" stroke="#a07810"/><path d="M5 15v11M5 21h10M17 9h8" stroke="#102898" stroke-width="1.200"/></symbol>
<symbol id="s2" viewBox="0 0 26 26"><path d="M3 1l9 5-9 5zM24 1l-9 5 9 5z" fill="#1020c0" stroke="none"/><path d="M13 0v26" stroke="#222" stroke-dasharray="3 1.500"/><rect x="2" y="15" width="10" height="9" fill="#f0f040" stroke="#333"/><path d="M15 14l10 10H15z" fill="#c81010" stroke="none"/></symbol>
<symbol id="s3" viewBox="0 0 26 26"><path d="M2 3c0-3 11-3 11 0v8c0 3-11 3-11 0z" fill="#b03080" stroke="#601040"/><path d="M5 13v12M5 20h9M16 8h8" stroke="#102898" stroke-width="1.200"/><circle cx="19" cy="20" r="5.500" stroke="#a02060" stroke-width="1.200"/><circle cx="19" cy="20" r="2" stroke="#a02060"/></symbol>
<symbol id="s4" viewBox="0 0 26 26"><rect x="4" y="1" width="4" height="13" fill="#2060d0"/><path d="M9 4l10-2-7 3 6 0-7 3" stroke="#2060d0"/><path d="M6 14v11M6 19h8M17 8h8" stroke="#102898" stroke-width="1.200"/><path d="M15 15h3l6 7v2h-9z" stroke="#102898"/></symbol>
<symbol id="s5" viewBox="0 0 26 26"><path d="M1 8l18-6v10L1 24z" fill="#f0e0c0" stroke="#a08060"/><path d="M1 12l18-6M1 16l18-6M6 6v16M12 4v16" stroke="#e06020"/><path d="M8 14l18-3v8l-14 5z" fill="#f08020" stroke="#a05010"/><path d="M12 18l14-3v4l-12 5z" fill="#2080e0" stroke="none"/></symbol>
<symbol id="s6" viewBox="0 0 26 26"><rect x="1" y="8" width="16" height="14" fill="#bbb" stroke="#333"/><rect x="5" y="11" width="8" height="8" fill="#8898c0" stroke="#333"/><path d="M1 24h20M18 12h6v6h-6z" stroke="#333"/><path d="M10 7l7-4v5zM18 6l6-5v6l-6 3z" fill="#f06030" stroke="#903010"/></symbol>
<symbol id="s7" viewBox="0 0 26 26"><rect x="1" y="6" width="7" height="18" fill="#f08020" stroke="#803000"/><rect x="9" y="5" width="7" height="19" fill="#30d030" stroke="#106010"/><path d="M17 6l8-4v19l-8 3z" fill="#2080e0" stroke="#104080"/></symbol>
<symbol id="s8" viewBox="0 0 26 26"><path d="M10 2c8 0 14 6 14 14M10 6c6 0 10 4 10 10M12 10c3 0 5 2 5 5" stroke="#1858b8" stroke-width="2.400"/><circle cx="9" cy="17" r="8" fill="#1860c8" stroke="none"/><path d="M8 11h3v2H8zM8 14h3v7H8z" fill="#fff" stroke="none"/></symbol>
<symbol id="s9" viewBox="0 0 26 26"><path d="M4 1h12l6 6v18H4z" fill="#fff" stroke="#3070c0" stroke-width="1.200"/><path d="M16 1v6h6" stroke="#3070c0"/><circle cx="13" cy="16" r="6" fill="#30a040" stroke="none"/><path d="M10 13c3-2 5 0 4 2-2 2-5 3-5 0z" fill="#3070c0" stroke="none"/></symbol>
<symbol id="s10" viewBox="0 0 26 26"><circle cx="13" cy="13" r="12" fill="#b0b4bc" stroke="#555"/><circle cx="13" cy="13" r="9" fill="#e0ecff" stroke="#5070a0"/><path d="M13 6v7h6" stroke="#203060" stroke-width="1.400"/></symbol>
<symbol id="s11" viewBox="0 0 26 26"><rect x="2" y="1" width="9" height="24" fill="url(#rainbow)" stroke="none"/><path d="M12 6l12 14-3 3L10 9z" fill="#222" stroke="none"/><path d="M11 1l1 3 3 1-3 1-1 3-1-3-3-1 3-1z" fill="#fff" stroke="none"/></symbol>
<symbol id="s12" viewBox="0 0 26 26"><rect x="3" y="1" width="7" height="20" fill="#3060d0" stroke="#203890"/><path d="M3 5l7 3M3 10l7 3M3 15l7 3" stroke="#90b0f0"/><path d="M1 23l6-3 7 3-7-1z" fill="#f0e020" stroke="none"/><path d="M13 7l11 13-3 3L11 10z" fill="#222" stroke="none"/><path d="M14 1l1 3 3 1-3 1-1 3-1-3-3-1 3-1z" fill="#fff" stroke="none"/></symbol>
<symbol id="s13" viewBox="0 0 26 26"><path d="M3 18l14-13 3 3L7 22z" fill="#9a9a9a" stroke="#333"/><path d="M12 2h10l2 4-8 1z" fill="#888" stroke="#333"/><path d="M1 22c4-6 10-4 13 1-4 2-9 2-13-1z" fill="#e86040" stroke="#802010"/><circle cx="9" cy="21" r="2" fill="#40a0d0" stroke="none"/></symbol>
<symbol id="mini" viewBox="0 0 16 16"><path d="M1 4V1h3M12 1h3v3M15 12v3h-3M4 15H1v-3" stroke="#888"/><rect x="4" y="4" width="8" height="8" fill="#e8eefc" stroke="#445"/><rect x="4" y="4" width="8" height="3" fill="#3c64b8" stroke="none"/></symbol>
<symbol id="smdrill" viewBox="0 0 24 24"><path d="M7 1h10v18l-5 4-5-4z" fill="#c0c4d0" stroke="#222" stroke-width="2"/><path d="M7 7l10-4M7 13l10-4M7 19l10-4" stroke="#222" stroke-width="2"/></symbol>
<symbol id="tabdrill" viewBox="0 0 24 24"><rect x="7" y="1" width="6" height="16" fill="#4050c0" stroke="none"/><path d="M7 4l6 2M7 9l6 2M7 14l6 2" stroke="#f0e020"/><path d="M10 17l-3 6 3-1 3 1z" fill="#f0c020" stroke="none"/><path d="M14 4l8-2-5 3 5 0-6 3" stroke="#888"/></symbol>
<symbol id="tabdoc" viewBox="0 0 24 24"><path d="M4 1h12l5 5v17H4z" fill="#f8f8f8" stroke="#eee"/><path d="M6 5l2 2v2M8 11h8" stroke="#ddd"/></symbol>
<symbol id="cloud" viewBox="0 0 24 24"><circle cx="12" cy="7" r="4.500" fill="none" stroke="#fff" stroke-width="2.600"/><circle cx="6.500" cy="15" r="4.500" fill="none" stroke="#fff" stroke-width="2.600"/><circle cx="17.500" cy="15" r="4.500" fill="none" stroke="#fff" stroke-width="2.600"/></symbol>
</defs>
</svg>

<div class="app">
  <header class="titlebar">
    <span class="nx">NX</span>
    <span class="title">NX 12.0.0.27 - 加工</span>
    <span class="siemens">SIEMENS</span>
    <div class="winbtns">
      <svg class="wb" viewBox="0 0 14 14"><path d="M1 12h9" stroke="#333" stroke-width="2"/></svg>
      <svg class="wb" viewBox="0 0 14 14"><path d="M4 4V1h9v7h-3M1 4h9v9H1z" fill="none" stroke="#333" stroke-width="1.300"/><path d="M1 4h9" stroke="#333" stroke-width="2.500"/></svg>
      <svg class="wb" viewBox="0 0 14 14"><path d="M2 2l10 10M12 2L2 12" stroke="#333" stroke-width="1.500"/></svg>
    </div>
  </header>

  <nav class="menubar">
    <b class="grip grip-light"></b>
    <span>文件(<u>F</u>)</span><span>编辑(<u>E</u>)</span><span>视图(<u>V</u>)</span><span>插入(<u>S</u>)</span><span>格式(<u>R</u>)</span><span>工具(<u>T</u>)</span><span>装配(<u>A</u>)</span><span>信息(<u>I</u>)</span><span>分析(<u>L</u>)</span><span class="wide">首选项(<u>P</u>)</span><span>窗口(<u>O</u>)</span><span>GC工具箱</span><span>帮助(<u>H</u>)</span>
    <div class="upload"><span class="upcloud"><svg class="upic"><use href="#cloud"/></svg></span><span class="uptext">拖拽上传</span></div>
  </nav>

  <div class="tb r1">
    <b class="grip"></b><svg class="t"><use href="#globe"/></svg><span class="tb-label">启动</span><b class="d dn"></b>
    <svg class="t"><use href="#doc"/></svg><svg class="t"><use href="#open"/></svg><svg class="t"><use href="#save"/></svg><svg class="t"><use href="#print"/></svg><b class="v"></b>
    <svg class="t"><use href="#cut"/></svg><svg class="t"><use href="#copy"/></svg><svg class="t"><use href="#paste"/></svg><svg class="t"><use href="#del"/></svg><b class="v"></b>
    <svg class="t"><use href="#undo"/></svg><b class="d off dw"></b><b class="v"></b>
    <svg class="t"><use href="#cube"/></svg><b class="d"></b><b class="v"></b>
    <svg class="t"><use href="#frame"/></svg><b class="d"></b><b class="v"></b>
    <svg class="t"><use href="#info"/></svg><b class="v"></b>
    <div class="search"><span>查找命令</span><svg class="lens"><use href="#lens"/></svg></div><b class="d"></b><b class="v"></b><b class="grip gs"></b>
    <svg class="t ml2"><use href="#fit"/></svg><b class="d dm"></b>
    <svg class="t"><use href="#shade"/></svg><b class="d dm"></b>
    <svg class="t"><use href="#cube"/></svg><b class="d dm"></b>
    <svg class="t"><use href="#vorange"/></svg><svg class="t"><use href="#vgray"/></svg><b class="d dm"></b>
    <svg class="t"><use href="#win"/></svg><b class="d"></b><b class="v"></b>
    <svg class="t"><use href="#vblue"/></svg><svg class="t"><use href="#vplay"/></svg><b class="d"></b><b class="v"></b><b class="grip g4"></b>
    <svg class="t"><use href="#lst"/></svg><svg class="t"><use href="#axes"/></svg><b class="d"></b><b class="v"></b>
    <svg class="t"><use href="#hand"/></svg><svg class="t"><use href="#palette"/></svg><b class="v"></b>
    <svg class="t"><use href="#pdia"/></svg><b class="d"></b><b class="v"></b>
    <svg class="t"><use href="#ant"/></svg><b class="d"></b>
    <svg class="t"><use href="#dim"/></svg><b class="d"></b><b class="v"></b><b class="grip g4"></b>
    <svg class="t"><use href="#cplus"/></svg><b class="d"></b><svg class="t"><use href="#cplus"/></svg>
    <svg class="t mln3"><use href="#cmove"/></svg><svg class="t"><use href="#mirror"/></svg><b class="v"></b>
    <svg class="t ml3"><use href="#gridd"/></svg><b class="v"></b>
    <svg class="t ml2"><use href="#link"/></svg><b class="d"></b><b class="v"></b><b class="grip g4"></b>
    <svg class="t"><use href="#plus"/></svg><b class="d"></b>
    <svg class="t"><use href="#extr"/></svg><b class="d"></b>
    <svg class="t"><use href="#cyl"/></svg><svg class="t"><use href="#ccol"/></svg><b class="d"></b>
  </div>

  <div class="tb r2">
    <b class="grip g2"></b><svg class="t"><use href="#ln"/></svg><b class="d ds"></b>
    <svg class="t"><use href="#ln"/></svg><svg class="t"><use href="#arc"/></svg><svg class="t"><use href="#spir"/></svg><svg class="t"><use href="#fan"/></svg><svg class="t"><use href="#star"/></svg><svg class="t"><use href="#dots"/></svg>
    <span class="tglyph">A</span>
    <svg class="t"><use href="#face"/></svg><svg class="t"><use href="#tilt"/></svg><svg class="t"><use href="#tilt2"/></svg><svg class="t"><use href="#cross"/></svg><svg class="t"><use href="#plane"/></svg><svg class="t"><use href="#mesh"/></svg><svg class="t"><use href="#sect"/></svg><svg class="t"><use href="#box2"/></svg><svg class="t"><use href="#cyl2"/></svg><b class="d ds"></b><b class="v"></b><b class="grip gs"></b>
    <svg class="t ml2"><use href="#key"/></svg><svg class="t"><use href="#sw"/></svg><svg class="t"><use href="#scurve"/></svg><svg class="t"><use href="#ucurve"/></svg><b class="d ds"></b><b class="v"></b><b class="grip gs"></b>
    <svg class="t"><use href="#ln"/></svg><svg class="t"><use href="#cross2"/></svg><svg class="t"><use href="#arcd"/></svg><svg class="t"><use href="#arcd2"/></svg><svg class="t"><use href="#pad"/></svg><b class="v"></b>
    <svg class="t"><use href="#arc2"/></svg><svg class="t"><use href="#cap"/></svg><b class="v"></b>
    <svg class="t ml4"><use href="#circ"/></svg><svg class="t"><use href="#circb"/></svg><b class="v"></b>
    <svg class="t ml2"><use href="#circc"/></svg><svg class="t"><use href="#circd"/></svg><b class="d ds"></b><b class="v"></b><b class="grip gs"></b>
    <svg class="t ml2"><use href="#b1"/></svg><b class="d dm"></b><svg class="t"><use href="#b2"/></svg><svg class="t"><use href="#b3"/></svg><svg class="t"><use href="#b4"/></svg><svg class="t"><use href="#b5"/></svg><b class="d ds"></b><svg class="t"><use href="#b6"/></svg><b class="d"></b><b class="d ds"></b><b class="v"></b><b class="grip gs"></b>
    <svg class="t"><use href="#sb"/></svg><span class="tgap"></span>
    <svg class="t"><use href="#drillk"/></svg><svg class="t"><use href="#redar"/></svg><svg class="t"><use href="#plusk"/></svg><b class="d"></b>
  </div>

  <div class="tb r3">
    <div class="combo c1"><b class="d off"></b></div>
    <div class="combo c2"><span>整个装配</span><b class="d off"></b></div>
    <svg class="t ml4"><use href="#gridd"/></svg><b class="v"></b>
    <svg class="t ml2"><use href="#ptfilter"/></svg><svg class="t"><use href="#ptred"/></svg><b class="d ds"></b><svg class="t"><use href="#rot"/></svg><svg class="t"><use href="#pl"/></svg><b class="v"></b>
    <svg class="t"><use href="#hexa"/></svg><svg class="t ml2"><use href="#hexb"/></svg><svg class="t"><use href="#sq"/></svg><b class="d ds"></b><b class="v"></b>
    <svg class="t ml3"><use href="#cgray"/></svg><svg class="t"><use href="#cblue"/></svg><b class="v"></b>
    <svg class="t ml4"><use href="#wh"/></svg><svg class="t"><use href="#ln"/></svg><svg class="t"><use href="#ln"/></svg><svg class="t"><use href="#ss"/></svg><svg class="t"><use href="#tee"/></svg><svg class="t"><use href="#circc"/></svg><svg class="t"><use href="#circ"/></svg><svg class="t"><use href="#plus"/></svg><svg class="t"><use href="#ln"/></svg><svg class="t"><use href="#sphere"/></svg><svg class="t"><use href="#mesh2"/></svg><b class="v"></b>
    <svg class="t"><use href="#gridv"/></svg>
    <b class="d dend"></b>
  </div>

  <div class="work">
    <div class="graphics">
      <div class="cue">指定参数</div>
      <div class="tabs">
        <div class="tab"><svg class="tabic"><use href="#tabdrill"/></svg><span class="tabname">_model1.prt</span><svg class="tabdoc"><use href="#tabdoc"/></svg><span class="tabx">×</span></div>
      </div>
      <svg class="scene" viewBox="0 198 1546 841">
        <polygon points="188,381 1181,399 1176,652 182,633" fill="#fff"/>
        <polygon points="182,633 1176,652 1173,806 179,788" fill="#adadad"/>
        <polygon points="287,666 1176,682 1173,775 287,759" fill="#fff"/>
        <path d="M188 381L1181 399M182 633L1176 652M179 788L1173 806M287 666L1176 682M287 666V759L1173 775" fill="none" stroke="#3a3a3a" stroke-width="1.200"/>
        <g fill="url(#holeg)" stroke="#333">
          <ellipse cx="359" cy="433" rx="17" ry="6.300"/><ellipse cx="910" cy="437" rx="17" ry="6.300"/><ellipse cx="666" cy="466" rx="17" ry="6.300"/><ellipse cx="1049.500" cy="503" rx="17" ry="6.300"/><ellipse cx="460" cy="516.700" rx="17" ry="6.300"/><ellipse cx="607" cy="526.700" rx="17" ry="6.300"/><ellipse cx="852" cy="525.700" rx="17" ry="6.300"/><ellipse cx="1130" cy="637.300" rx="17" ry="6.300"/><ellipse cx="1127" cy="760.700" rx="17" ry="6.300"/>
        </g>
        <path d="M1130 607v20" stroke="#1010d0" stroke-width="1.500" stroke-dasharray="7 6"/>
        <path d="M1130 631v12M1127.500 755v8" stroke="#20e0e0"/>
        <path d="M1129.500 683L1128 753" stroke="#f4c0d8" stroke-width="1.500"/>
        <path d="M1129.500 683L1128 753" stroke="#10e010" stroke-width="1.500" stroke-dasharray="11 5"/>
        <path d="M682.500 516.700V418" stroke="#1040d0" stroke-width="1.500" fill="none"/>
        <path d="M683 420l-3.500 20h7z" fill="#1040d0"/>
        <path d="M682 517l104 1.500" stroke="#d03030" stroke-width="2" fill="none"/>
        <path d="M786 518l-20-5v10z" fill="#c03030"/>
        <circle cx="682" cy="485.700" r="2.500" fill="#1a7a40"/>
        <text class="axl" x="661" y="418" fill="#1040d0">ZM</text>
        <text class="axl" x="663" y="478" fill="#20a040">YM</text>
        <text class="axl" x="769" y="533" fill="#e04040">XM</text>
        <rect x="69" y="936" width="26" height="34" fill="#999" stroke="#aaa"/>
        <path d="M69 946h26M69 961h26" stroke="#c0c0c0"/>
        <path d="M67 970v-36" stroke="#1040d0" stroke-width="3.500"/>
        <path d="M67.500 930l-4 10h8z" fill="#1040d0"/>
        <path d="M70 971h40" stroke="#d03838" stroke-width="3"/>
        <path d="M112 971l-11-4v8z" fill="#c83030"/>
        <circle cx="67" cy="970.500" r="4" fill="#ddd"/>
        <text class="axs" x="64" y="928" fill="#1040d0">Z</text>
        <text class="axs" x="113" y="976" fill="#a02828">X</text>
      </svg>
    </div>

    <aside class="nav">
      <div class="navleft">
        <svg class="nl"><use href="#opgen"/></svg>
        <svg class="nl"><use href="#opss"/></svg>
        <svg class="nl"><use href="#opver"/></svg>
        <i class="nlsep"></i>
        <svg class="nl nl-off"><use href="#opgen"/></svg>
        <svg class="nl nl-off"><use href="#opdoc"/></svg>
        <b class="nltri"></b>
      </div>
      <div class="navbody">
        <div class="navtop">
          <svg class="mini"><use href="#mini"/></svg>
          <div class="navlabel">程序顺序</div>
        </div>
        <div class="listhead"><span></span><span class="hcol">换刀</span></div>
        <div class="listbody">
          <div class="lrow"></div>
          <div class="lrow"></div>
          <div class="lrow"><span class="lname">NC_PROGRAM</span></div>
          <div class="lrow"><span class="lname lname-op">SEQUENTIAL_DRILL...</span><svg class="smd"><use href="#smdrill"/></svg></div>
        </div>
        <div class="hscroll"><span class="hs-l">&#8249;</span><i class="hs-thumb"></i></div>
        <div class="track"></div>
        <div class="ngroup"><span>相关性</span><svg class="chev" viewBox="0 0 12 8"><path d="M1 1l5 5 5-5"/></svg></div>
        <div class="ngroup"><span>细节</span><svg class="chev" viewBox="0 0 12 8"><path d="M1 1l5 5 5-5"/></svg></div>
      </div>
      <div class="strip">
        <svg class="st st-gear"><use href="#tgear"/></svg>
        <svg class="st st-a"><use href="#s1"/></svg>
        <svg class="st"><use href="#s2"/></svg>
        <svg class="st"><use href="#s3"/></svg>
        <span class="st-active"><svg class="st0"><use href="#s4"/></svg></span>
        <svg class="st"><use href="#s5"/></svg>
        <svg class="st st-n"><use href="#s6"/></svg>
        <svg class="st"><use href="#s7"/></svg>
        <svg class="st st-b"><use href="#s8"/></svg>
        <svg class="st st-n"><use href="#s9"/></svg>
        <svg class="st st-c"><use href="#s10"/></svg>
        <svg class="st st-n"><use href="#s11"/></svg>
        <svg class="st"><use href="#s12"/></svg>
        <svg class="st st-n"><use href="#s13"/></svg>
      </div>
    </aside>
  </div>

  <footer class="taskbar"><i class="taskbtn"></i><span class="clock">14:51</span><i class="taskedge"></i></footer>
</div>

<section class="dialog">
  <div class="dtitle">
    <svg class="dgear" viewBox="0 0 24 24"><path d="M12 2v4M12 18v4M2 12h4M18 12h4M5 5l3 3M16 16l3 3M19 5l-3 3M8 16l-3 3" stroke="#fff" stroke-width="3"/><circle cx="12" cy="12" r="6" fill="none" stroke="#fff" stroke-width="3"/></svg>
    <span class="dname">顺序钻 - [SEQUENTIAL_DRILLING]</span>
    <svg class="dclose" viewBox="0 0 12 12"><path d="M1 1l10 10M11 1L1 11" stroke="#fff" stroke-width="1.800"/></svg>
  </div>
  <div class="dbody">
    <div class="sec s-geo">
      <div class="shead"><span>几何体</span><svg class="chev" viewBox="0 0 12 8"><path d="M1 7l5-5 5 5" /></svg></div>
      <div class="row"><span class="lbl lbl-top">几何体</span><div class="sel w117"><span>MCS_MILL</span></div><button class="ib"><svg><use href="#geonew"/></svg></button><button class="ib wr"><svg><use href="#wrench"/></svg></button></div>
      <div class="row"><span class="lbl lbl-low">指定特征几何体</span><button class="ib"><svg><use href="#feat"/></svg></button><button class="ib"><svg><use href="#flash"/></svg></button></div>
    </div>
    <div class="sec s-tool">
      <div class="shead"><span>工具</span><svg class="chev" viewBox="0 0 12 8"><path d="M1 7l5-5 5 5"/></svg></div>
      <div class="row"><span class="lbl lbl-top">刀具</span><div class="sel w117"><span>STD_DRILL (钻刀</span></div><button class="ib"><svg><use href="#toolnew"/></svg></button><button class="ib"><svg><use href="#wrench2"/></svg></button></div>
      <div class="sub"><span>输出</span><svg class="chev chev-s" viewBox="0 0 12 8"><path d="M1 1l5 5 5-5"/></svg></div>
      <div class="sub"><span>换刀设置</span><svg class="chev chev-s" viewBox="0 0 12 8"><path d="M1 1l5 5 5-5"/></svg></div>
    </div>
    <div class="sec s-path">
      <div class="shead"><span>刀轨设置</span><svg class="chev" viewBox="0 0 12 8"><path d="M1 7l5-5 5 5"/></svg></div>
      <div class="row row-first"><span class="lbl lbl-top">方法</span><div class="sel w117"><span>METHOD</span></div><button class="ib"><svg><use href="#method"/></svg></button><button class="ib wr-off"><svg><use href="#wrench"/></svg></button></div>
      <div class="row row-s"><span class="lbl">运动输出</span><div class="sel w141"><span>单步移动</span></div></div>
      <div class="row"><span class="lbl lbl-top">循环</span><div class="sel w141"><span>中断</span></div><button class="ib wr"><svg><use href="#wrench"/></svg></button></div>
      <div class="row"><span class="lbl">切削参数</span><button class="ib"><svg><use href="#cutp"/></svg></button></div>
      <div class="row"><span class="lbl">非切削移动</span><button class="ib"><svg><use href="#ncut"/></svg></button></div>
      <div class="row"><span class="lbl">进给率和速度</span><button class="ib"><svg><use href="#feed"/></svg></button></div>
      <label class="chk chk-a"><i class="box"><svg viewBox="0 0 12 12"><path d="M2 6l3 3 5-6" fill="none" stroke="#555" stroke-width="1.300"/></svg></i>切削碰撞检查</label>
      <label class="chk"><i class="box"><svg viewBox="0 0 12 12"><path d="M2 6l3 3 5-6" fill="none" stroke="#555" stroke-width="1.300"/></svg></i>过切检查</label>
    </div>
    <div class="sec closed"><div class="shead"><span>机床控制</span><svg class="chev" viewBox="0 0 12 8"><path d="M1 1l5 5 5-5"/></svg></div></div>
    <div class="sec closed"><div class="shead"><span>程序</span><svg class="chev" viewBox="0 0 12 8"><path d="M1 1l5 5 5-5"/></svg></div></div>
    <div class="sec closed"><div class="shead"><span>描述</span><svg class="chev" viewBox="0 0 12 8"><path d="M1 1l5 5 5-5"/></svg></div></div>
    <div class="sec closed"><div class="shead"><span>选项</span><svg class="chev" viewBox="0 0 12 8"><path d="M1 1l5 5 5-5"/></svg></div></div>
    <div class="sec s-op">
      <div class="shead"><span>操作</span><svg class="chev" viewBox="0 0 12 8"><path d="M1 7l5-5 5 5"/></svg></div>
      <div class="oprow"><button class="ib"><svg><use href="#opgen"/></svg></button><button class="ib"><svg><use href="#opss"/></svg></button><button class="ib"><svg><use href="#opver"/></svg></button><button class="ib"><svg><use href="#opdoc"/></svg></button></div>
    </div>
    <div class="more"><b></b></div>
    <div class="actions"><button class="act ok">确定</button><button class="act">取消</button></div>
  </div>
</section>

<div class="netw">
  <div class="ball"><span>47%</span></div>
  <div class="netpill">
    <div class="netcol"><span class="up">↑</span><span class="down">↓</span></div>
    <div class="netrates"><span>0K/s</span><span>0K/s</span></div>
    <svg class="netic" viewBox="0 0 24 24"><circle cx="11" cy="13" r="9" fill="#5a90e0"/><path d="M11 8v10M6 13h10" stroke="#fff" stroke-width="2.500"/><circle cx="18" cy="5" r="4" fill="#e84848"/></svg>
  </div>
</div>

<div class="wm">
  <svg class="wmhex" viewBox="0 0 72 82"><path d="M36 0l36 20v42L36 82 0 62V20zM36 8L7 24v34l29 16 29-16V24z" fill="#bfe6fa" fill-rule="evenodd"/><path d="M0 20l7 4v34l29 16 29-16 7 4-36 20L0 62z" fill="#7fd0f8"/><path d="M17 50c6 10 16 14 26 12l22-4v4L36 82 10 66z" fill="#7fd0f8"/><path d="M36 27l19 10-19 11-19-11z" fill="#d8effb"/><path d="M17 37l19 11v19L17 56z" fill="#a8dcf8"/><path d="M55 37L36 48v19l19-11z" fill="#7fc8f0"/></svg>
  <span class="wmtext">3D世界网</span>
  <span class="wmsmall">WWW.3DSJW.COM</span>
</div>

<div class="ime">
  <span class="du">du</span>
  <div class="imebar">
    <span class="imezh">中</span>
    <span class="imep">°,</span>
    <svg class="imei" viewBox="0 0 20 20"><path d="M3 4h12v10H3zM15 6h3v4h-3M2 18h14" fill="none" stroke="#2b7bf0" stroke-width="2"/></svg>
    <svg class="imei" viewBox="0 0 20 20"><circle cx="10" cy="7" r="5" fill="none" stroke="#a8c8f4" stroke-width="2"/><path d="M2 19c1-5 4-6 8-6s7 1 8 6z" fill="none" stroke="#a8c8f4" stroke-width="2"/></svg>
    <svg class="imei" viewBox="0 0 20 20"><path d="M2 2h6v6H2zM12 2h6v6h-6zM2 12h6v6H2zM12 12h6v6h-6z" fill="none" stroke="#2b7bf0" stroke-width="2"/></svg>
  </div>
</div>
</body>
</html>
```
FILE: styles.css
```css
*{box-sizing:border-box}
html,body{margin:0;padding:0;width:1920px;height:1048px;overflow:hidden;background:#fff}
body{font:12px/1.2 "Noto Sans","Noto Sans CJK SC",sans-serif;color:#222;position:relative}
.defs{position:absolute;width:0;height:0}
.app{display:flex;flex-direction:column;width:1920px;height:1048px}
button{font:inherit;padding:0;margin:0}

.titlebar{height:26px;display:flex;align-items:center;background:#fff;flex:none}
.nx{font:bold 23px/26px "Liberation Sans",sans-serif;color:#8ea6b6;margin-left:4px;width:37px;border-right:1px solid #ddd}
.title{font-size:12.500px;margin-left:5px;color:#222}
.siemens{margin-left:auto;font:bold 13px "Liberation Sans",sans-serif;color:#009a9a;letter-spacing:.55px}
.winbtns{display:flex;margin-left:24px;gap:10px;margin-right:6px}
.wb{width:14px;height:14px}

.menubar{height:27px;flex:none;background:#56a0ba;display:flex;align-items:center;gap:11.500px;color:#222;font-size:12px;white-space:nowrap;padding-left:2px}
.menubar u{text-decoration:underline}
.menubar .wide{margin-left:6px}
.grip{flex:none;width:7px;height:24px;display:block;background:radial-gradient(circle,#999 .8px,transparent 1px) 1px 0/3px 3px repeat-y}
.grip-light{background:radial-gradient(circle,#cde 0.8px,transparent 1px) 1px 0/3px 3px repeat-y;margin-right:-8.500px}
.upload{margin-left:auto;margin-right:108px;display:flex;height:24px;width:102px;border-radius:2px;overflow:hidden;box-shadow:0 0 2px #3a80c0;margin-top:2px}
.upcloud{width:29px;background:#2a8ae0;display:flex;align-items:center;justify-content:center}
.upic{width:22px;height:22px}
.uptext{flex:1;background:linear-gradient(#cfe6f6,#a9d2ee);color:#6f8a9c;text-align:center;line-height:24px}

.tb{display:flex;align-items:center;flex:none;background:#fff;white-space:nowrap}
.r1{height:34px;width:1695px;border-bottom:1px solid #dcdcdc;border-right:1px solid #e4e4e4}
.r2{height:34px;width:1818px;border-bottom:1px solid #dcdcdc;border-right:1px solid #e4e4e4}
.r3{height:32px;width:1920px;border-bottom:2px solid #8f8f8f}
.t{flex:none;width:31px;height:26px;padding:0 3.5px;fill:none;stroke:#bcbcbc;stroke-width:1.1}
.r3 .t{width:23px;height:22px;padding:0 2px}
.ml2{margin-left:2px}
.ml3{margin-left:3px}
.ml4{margin-left:4px}
.mln3{margin-left:-3px}
.tb-label{width:22px;font-size:12px;flex:none}
.tglyph{flex:none;width:31px;text-align:center;font:bold 27px/28px "Liberation Serif",serif;color:#a8a8a8}
.d{flex:none;width:14px;height:14px;position:relative;display:block;align-self:center}
.d::after{content:"";position:absolute;left:3.500px;top:6px;border:3.500px solid transparent;border-top:4px solid #111;border-bottom:0}
.dn{width:12px;margin-right:1px}
.dm{width:12px}
.dw{width:17px}
.ds{width:11px}
.r3 .ds{width:9px}
.off::after{border-top-color:#aaa}
.v{flex:none;width:4px;height:26px;display:block;background:linear-gradient(#d8d8d8,#d8d8d8) center/1px 100% no-repeat}
.gs{width:6px}
.g2{width:9px}
.g4{width:4px}
.tgap{flex:none;width:14px}
.dend{margin-left:auto;margin-right:2px}
.search{flex:none;width:126px;height:20px;margin:0 0 0 6.500px;border:1px solid #888;display:flex;align-items:center;justify-content:space-between;padding:0 3px 0 2px;font-size:12px;color:#222}
.lens{width:16px;height:17px;fill:none;stroke:#444}
.combo{flex:none;height:20px;border:1px solid #aaa;outline:0;display:flex;align-items:center;justify-content:space-between;padding:0 4px 0 3px;color:#aaa;font-size:12px}
.c1{width:133px;margin-left:5px}
.c2{width:139px;margin-left:7px}

.work{flex:1;display:flex;min-height:0}
.graphics{width:1546px;display:flex;flex-direction:column;flex:none}
.cue{height:22px;line-height:22px;padding-left:3px;font-size:12px;flex:none;color:#111}
.tabs{height:23px;border-bottom:2px solid #56a0ba;flex:none}
.tab{width:133px;height:21px;background:#56a0ba;display:flex;align-items:center;color:#fff;font-size:13px}
.tabic{width:18px;height:19px;margin-left:5px;fill:none;flex:none}
.tabname{margin-left:3px;width:73px;white-space:nowrap;font-size:12.500px}
.tabdoc{width:12px;height:14px;fill:none;margin-left:3px;flex:none}
.tabx{margin-left:4px;font-size:16px;color:#c8dce4;line-height:16px}
.scene{display:block;width:1546px;height:842px;background:#000;border-left:1px solid #eee;border-bottom:1px solid #eee;flex:none}
.axl{font:11.500px "Liberation Sans",sans-serif}
.axs{font:11px "Liberation Sans",sans-serif}

.nav{flex:1;display:flex;min-width:0}
.navleft{width:47px;flex:none;background:#fff;border-right:1px solid #aaa;display:flex;flex-direction:column;align-items:center;justify-content:flex-end;padding-bottom:5px;gap:8px}
.nl{width:24px;height:24px;fill:none;stroke:#999;flex:none}
.nl-off{opacity:.3}
.nlsep{width:38px;height:1px;background:#ccc;flex:none;margin:-3px 0 -4px}
.nltri{width:0;height:8px;border:4px solid transparent;border-right:4px solid #111;border-left:0;align-self:flex-start;margin-left:4px;margin-top:-3px}
.navbody{flex:1;display:flex;flex-direction:column;padding:0 6px 0 10px;border-right:1px solid #aaa;min-width:0;background:#fff}
.navtop{height:51px;flex:none;display:flex;flex-direction:column}
.mini{width:16px;height:16px;fill:none;align-self:flex-end;margin:2px 1px 0 0;flex:none}
.navlabel{margin-top:11px;padding-left:98px;font-size:12px;color:#222}
.listhead{height:21px;flex:none;display:grid;grid-template-columns:200px 1fr;background:#f0f0f0;border:1px solid #ddd;border-bottom:2px solid #e0e0e0;line-height:18px}
.hcol{border-left:1px solid #bbb;padding-left:6px;color:#222}
.listbody{height:738px;flex:none;position:relative;border-left:1px solid #ddd;border-right:1px solid #ddd;background:repeating-linear-gradient(#fff 0,#fff 19px,#e8e8e8 19px,#e8e8e8 20px,#fafafa 20px,#fafafa 39px,#e8e8e8 39px,#e8e8e8 40px)}
.listbody::after{content:"";position:absolute;left:199px;top:0;bottom:0;width:1px;background:#000}
.lrow{height:20px;display:flex;align-items:center}
.lname{width:199px;text-align:right;white-space:nowrap;padding-right:84px;font-size:12px;color:#222}
.lname-op{padding-right:5px;color:#7a2fd0}
.smd{width:13px;height:15px;margin-left:5px;fill:none;flex:none}
.hscroll{height:16px;flex:none;background:#f0f0f0;display:flex;align-items:center;border-left:1px solid #ddd}
.hs-l{width:17px;text-align:center;font:bold 16px/14px "Liberation Sans",sans-serif;color:#333}
.hs-thumb{width:78px;height:15px;background:#c8c8c8;flex:none}
.track{height:4px;margin-top:2px;flex:none;background:#d0d0d0;border:1px solid #aaa}
.ngroup{height:24px;flex:none;font-size:14px;line-height:20px;padding:0 7px 0 6px;color:#1a7fa8;border-bottom:3px solid #ccc;display:flex;align-items:center;justify-content:space-between}
.track + .ngroup{margin-top:1px}
.strip{width:32px;flex:none;background:#d8d8d8;margin-top:22px;display:flex;flex-direction:column;align-items:center;padding-top:2px}
.st{flex:none;width:26px;height:26px;margin-top:17px;fill:none}
.st-gear{margin-top:0;width:24px;height:24px}
.st-a{margin-top:21px}
.st-n{margin-top:15px}
.st-b{margin-top:31px}
.st-c{margin-top:39px}
.st-active{flex:none;width:30px;height:44px;background:#fff;border:1px solid #bbb;border-left:0;align-self:flex-start;display:flex;align-items:center;justify-content:center;margin-top:8px;padding-bottom:8px}
.st-active + .st{margin-top:6px}
.st0{width:26px;height:26px;fill:none}

.taskbar{height:8px;flex:none;background:#090b12;position:relative;overflow:hidden;display:flex}
.taskbtn{width:48px;height:8px;background:#333;margin-left:296px;flex:none}
.clock{position:absolute;left:1816px;top:5px;color:#fff;font-size:12px;line-height:14px}
.taskedge{position:absolute;left:1915px;top:0;width:1px;height:8px;background:#aaa}

.dialog{position:absolute;left:1371px;top:83px;width:328px;height:785px;background:#efefef;box-shadow:0 0 0 1px #ddd;display:flex;flex-direction:column}
.dtitle{height:24px;background:#56a0ba;display:flex;align-items:center;color:#fff;flex:none;padding:0 9px 0 6px}
.dgear{width:15px;height:15px;flex:none}
.dname{margin-left:8px;font-size:14px;white-space:nowrap}
.dclose{width:12px;height:12px;margin-left:auto;flex:none}
.dbody{flex:1;padding:4px 6px 0;display:flex;flex-direction:column;min-height:0}
.sec{background:#fff;border-bottom:2px solid #c8c8c8;flex:none;padding:0 9px}
.s-geo{height:105px;margin-bottom:3px}
.s-tool{height:123px;margin-bottom:3px}
.s-path{height:280px;margin-bottom:2px}
.s-op{height:70px;margin-top:1px}
.closed{height:25px;margin-bottom:2px}
.shead{height:30px;display:flex;align-items:center;justify-content:space-between;font-size:13.500px;color:#0f6e92;padding:0 0 4px 0;margin-left:-2px;margin-right:-4px}
.closed .shead{height:23px;padding:3px 0 0}
.chev{width:11px;height:8px;fill:none;stroke:#0b6a8a;stroke-width:1.800;flex:none}
.chev-s{margin-right:-1px}
.row{display:flex;align-items:flex-start;height:32px;margin-bottom:2px;gap:2px}
.s-path .shead{height:31px}
.row-first{margin-bottom:2px}
.row-s{height:24px;margin-bottom:3px}
.lbl{flex:1;white-space:nowrap;font-size:12px;line-height:32px;color:#222;padding-left:0}
.lbl-top{line-height:25px}
.lbl-low{line-height:38px}
.row-s .lbl{line-height:28px}
.sel{height:25px;border:1px solid #aaa;background:#fff;display:flex;align-items:center;padding-left:4px;font-size:12px;position:relative;flex:none}
.row-s .sel{height:24px}
.sel::after{content:"";position:absolute;right:5px;top:10px;border:4px solid transparent;border-top:4px solid #222;border-bottom:0}
.sel span{white-space:nowrap}
.w117{width:117px}
.w141{width:141px}
.ib{width:32px;height:32px;border:1px solid #aaa;background:#fff;display:block;flex:none;padding:3px;color:#e8b020}
.ib svg{display:block;width:24px;height:24px;fill:none;stroke:none}
.wr svg{stroke:#806010;stroke-width:.8}
.wr-off{color:#c4c4c4;background:#f2f2f2;border-color:#ccc}
.wr-off svg{stroke:#aaa;stroke-width:.8}
.sub{height:23px;margin-top:3px;background:#efefef;border:1px solid #ccc;display:flex;align-items:center;justify-content:space-between;padding:0 5px 0 8px;color:#0f6e92;font-size:12px}
.row + .sub{margin-top:0}
.chk{display:flex;align-items:center;height:23px;font-size:12px;color:#222}
.chk-a{margin-top:-1px}
.box{width:13px;height:13px;border:1px solid #666;margin-right:5px;background:#fff;flex:none;display:block}
.box svg{display:block;width:11px;height:11px}
.oprow{display:flex;justify-content:center;gap:2px}
.more{height:18px;flex:none;border-bottom:1px solid #ccc;display:flex;align-items:center;justify-content:center}
.more b{width:0;height:0;border:4.500px solid transparent;border-bottom:5px solid #111;border-top:0;display:block;margin-right:-1px}
.actions{display:flex;justify-content:flex-end;gap:5px;padding:8px 9px 0 0}
.act{width:54px;height:25px;background:#ddd;border:1px solid #aaa;color:#222;font-size:12px}
.ok{background:#73b1c7;border-color:#73b1c7;color:#fff}

.wm{position:absolute;left:1637px;top:953px;width:270px;height:84px;pointer-events:none}
.wmhex{position:absolute;left:0;top:0;width:72px;height:82px;opacity:.85}
.wmtext{position:absolute;left:80px;top:2px;font:bold 46px/56px "Noto Sans","Noto Sans CJK SC",sans-serif;color:rgba(238,240,242,.6);white-space:nowrap}
.wmsmall{position:absolute;left:92px;top:58px;font-size:13px;letter-spacing:1.500px;color:rgba(225,230,235,.6);white-space:nowrap}

.netw{position:absolute;left:1768px;top:950px;width:128px;height:50px;display:flex;align-items:center}
.ball{position:relative;z-index:1;width:48px;height:48px;border-radius:50%;background:radial-gradient(ellipse 14px 5px at 50% 14%,rgba(255,255,255,.55),transparent),linear-gradient(#0a7038,#108048 50%,#46c04c 52%,#2ea044);box-shadow:0 0 0 2px #eee,0 0 2px 3px #bbb;color:#fff;font-size:16px;display:flex;align-items:center;justify-content:center;flex:none}
.netpill{margin-left:-18px;width:98px;height:43px;margin-top:4px;background:rgba(250,250,250,.95);border-radius:0 20px 20px 0;box-shadow:0 1px 3px #888;display:flex;align-items:center;padding-left:22px}
.netcol{display:flex;flex-direction:column;font-size:12px;font-weight:bold;line-height:15px;width:17px}
.up{color:#e05030}
.down{color:#20a040}
.netrates{display:flex;flex-direction:column;font-size:10.500px;line-height:15px;width:24px;text-align:right;color:#333;margin-right:5px}
.netic{width:20px;height:20px;flex:none}

.ime{position:absolute;left:1696px;top:1005px;display:flex;align-items:center;height:35px}
.du{position:relative;z-index:1;width:35px;height:35px;border-radius:50%;background:#2b7bf0;color:#fff;font:italic 21px/33px "Liberation Sans",sans-serif;text-align:center;flex:none}
.imebar{margin-left:-17px;width:153px;height:29px;padding-left:26px;background:rgba(255,255,255,.95);border:1px solid #a8c8f4;border-left:0;display:flex;align-items:center;gap:8px}
.imezh{font-size:16px;font-weight:bold;color:#2b7bf0}
.imep{font-size:17px;font-weight:bold;color:#2b7bf0;line-height:20px;width:16px;margin-left:4px}
.imei{width:18px;height:18px;flex:none}
```
